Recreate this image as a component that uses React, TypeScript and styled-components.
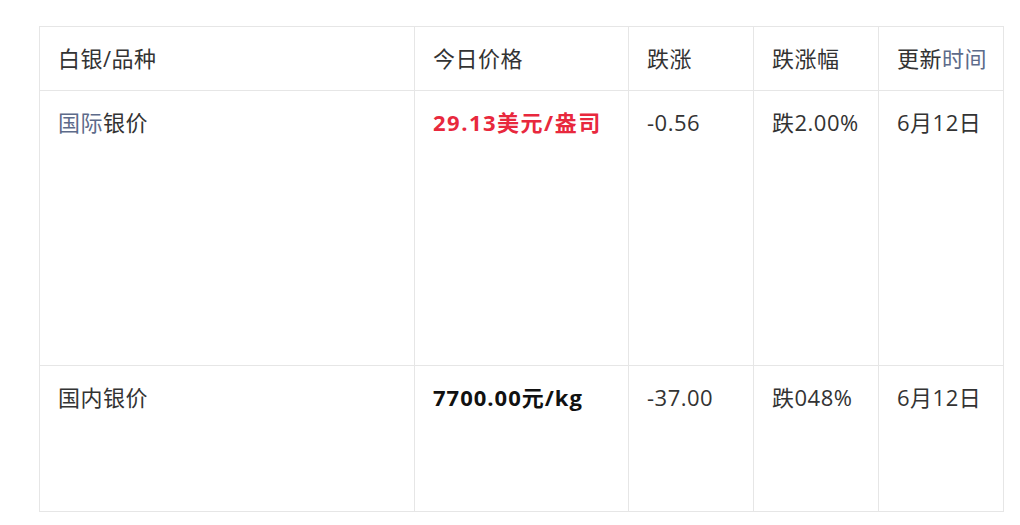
import styled, { createGlobalStyle } from 'styled-components';

const GlobalStyle = createGlobalStyle`
  html, body {
    margin: 0;
    padding: 0;
    background: #ffffff;
  }
  body {
    font-family: "Open Sans", "Noto Sans CJK SC", sans-serif;
    color: #333333;
  }
`;

const Page = styled.div`
  padding: 26px 0 0 39px;
`;

const PriceTable = styled.table`
  width: 964px;
  border-collapse: collapse;
  table-layout: fixed;
  font-size: 22px;
  letter-spacing: 0.5px;
`;

const Cell = styled.td<{ $height?: number }>`
  border: 1px solid #e6e6e6;
  padding: 16px 18px 0;
  vertical-align: top;
  line-height: 30px;
  height: ${(p) => (p.$height ? `${p.$height}px` : 'auto')};
  box-sizing: border-box;
  white-space: nowrap;
  color: #333333;
`;

const Muted = styled.span`
  color: #5d6b8a;
`;

const Price = styled.span<{ $red?: boolean }>`
  font-weight: 700;
  color: ${(p) => (p.$red ? '#e8283d' : '#111111')};
  letter-spacing: ${(p) => (p.$red ? '1.5px' : '1px')};
`;

const columns = [375, 214, 125, 125, 125];

const rows = [
  {
    name: (
      <>
        <Muted>国际</Muted>银价
      </>
    ),
    price: <Price $red>29.13美元/盎司</Price>,
    change: '-0.56',
    pct: '跌2.00%',
    date: '6月12日',
    height: 275,
  },
  {
    name: '国内银价',
    price: <Price>7700.00元/kg</Price>,
    change: '-37.00',
    pct: '跌048%',
    date: '6月12日',
    height: 146,
  },
];

export default function App() {
  return (
    <>
      <GlobalStyle />
      <Page>
        <PriceTable>
          <colgroup>
            {columns.map((w, i) => (
              <col key={i} style={{ width: w }} />
            ))}
          </colgroup>
          <tbody>
            <tr>
              <Cell $height={64}>白银/品种</Cell>
              <Cell>今日价格</Cell>
              <Cell>跌涨</Cell>
              <Cell>跌涨幅</Cell>
              <Cell>
                更新<Muted>时间</Muted>
              </Cell>
            </tr>
            {rows.map((r, i) => (
              <tr key={i}>
                <Cell $height={r.height}>{r.name}</Cell>
                <Cell>{r.price}</Cell>
                <Cell>{r.change}</Cell>
                <Cell>{r.pct}</Cell>
                <Cell>{r.date}</Cell>
              </tr>
            ))}
          </tbody>
        </PriceTable>
      </Page>
    </>
  );
}
